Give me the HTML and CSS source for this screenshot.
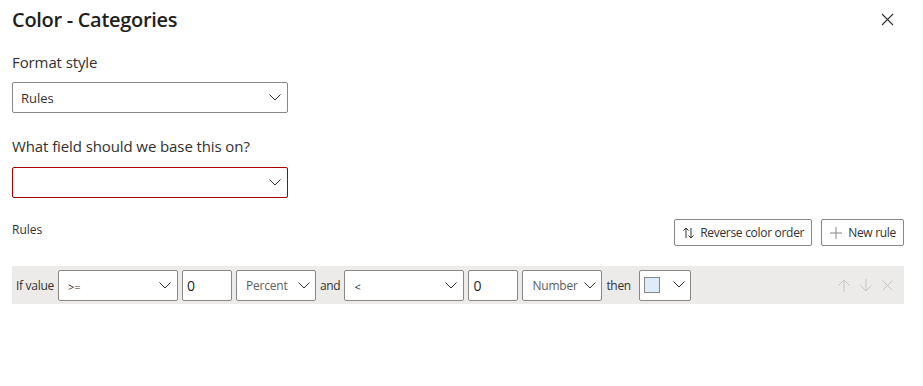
FILE: index.html
```html
<!DOCTYPE html>
<html lang="en">
<head>
    <meta charset="UTF-8">
    <title>Color - Categories</title>
    <link rel="stylesheet" href="styles.css">
</head>
<body>
    <div class="panel">
        <div class="panel-header">
            <h1 class="panel-title">Color - Categories</h1>
            <button class="close-button" aria-label="Close">
                <svg width="13" height="13" viewBox="0 0 13 13"><path d="M1 1 L12 12 M12 1 L1 12" stroke="#323130" stroke-width="1.1" fill="none"/></svg>
            </button>
        </div>

        <div class="field-label">Format style</div>
        <div class="dropdown">
            <span class="dropdown-text">Rules</span>
            <svg class="chevron" width="12" height="7" viewBox="0 0 12 7"><path d="M0.5 0.5 L6 6 L11.5 0.5" stroke="#323130" fill="none"/></svg>
        </div>

        <div class="field-label field-label-second">What field should we base this on?</div>
        <div class="dropdown dropdown-error">
            <span class="dropdown-text"></span>
            <svg class="chevron" width="12" height="7" viewBox="0 0 12 7"><path d="M0.5 0.5 L6 6 L11.5 0.5" stroke="#323130" fill="none"/></svg>
        </div>

        <div class="rules-header">
            <div class="rules-label">Rules</div>
            <div class="rules-actions">
                <button class="action-button">
                    <svg width="11" height="12" viewBox="0 0 11 12"><path d="M3 11 V1 M0.5 3.5 L3 1 L5.5 3.5 M8 1 V11 M5.5 8.5 L8 11 L10.5 8.5" stroke="#323130" fill="none"/></svg>
                    Reverse color order
                </button>
                <button class="action-button">
                    <svg width="12" height="12" viewBox="0 0 12 12"><path d="M6 0 V12 M0 6 H12" stroke="#8a8886" fill="none"/></svg>
                    New rule
                </button>
            </div>
        </div>

        <div class="rule-row">
            <span class="row-text">If value</span>
            <div class="row-select select-op">
                <span class="op-text">&gt;=</span>
                <svg class="chevron" width="12" height="7" viewBox="0 0 12 7"><path d="M0.5 0.5 L6 6 L11.5 0.5" stroke="#323130" fill="none"/></svg>
            </div>
            <div class="row-input">0</div>
            <div class="row-select select-type">
                <span class="type-text">Percent</span>
                <svg class="chevron" width="12" height="7" viewBox="0 0 12 7"><path d="M0.5 0.5 L6 6 L11.5 0.5" stroke="#323130" fill="none"/></svg>
            </div>
            <span class="row-text">and</span>
            <div class="row-select select-op">
                <span class="op-text">&lt;</span>
                <svg class="chevron" width="12" height="7" viewBox="0 0 12 7"><path d="M0.5 0.5 L6 6 L11.5 0.5" stroke="#323130" fill="none"/></svg>
            </div>
            <div class="row-input">0</div>
            <div class="row-select select-type">
                <span class="type-text">Number</span>
                <svg class="chevron" width="12" height="7" viewBox="0 0 12 7"><path d="M0.5 0.5 L6 6 L11.5 0.5" stroke="#323130" fill="none"/></svg>
            </div>
            <span class="row-text row-text-then">then</span>
            <div class="color-picker">
                <span class="swatch"></span>
                <svg class="chevron chevron-top" width="12" height="7" viewBox="0 0 12 7"><path d="M0.5 0.5 L6 6 L11.5 0.5" stroke="#323130" fill="none"/></svg>
            </div>
            <div class="row-icons">
                <svg width="12" height="13" viewBox="0 0 12 13"><path d="M6 13 V1 M0.5 6.5 L6 1 L11.5 6.5" stroke="#c8c6c4" fill="none"/></svg>
                <svg width="12" height="13" viewBox="0 0 12 13"><path d="M6 0 V12 M0.5 6.5 L6 12 L11.5 6.5" stroke="#c8c6c4" fill="none"/></svg>
                <svg width="11" height="11" viewBox="0 0 11 11"><path d="M0.5 0.5 L10.5 10.5 M10.5 0.5 L0.5 10.5" stroke="#c8c6c4" fill="none"/></svg>
            </div>
        </div>
    </div>
</body>
</html>
```

FILE: styles.css
```css
body {
    margin: 0;
    background-color: #ffffff;
    font-family: "Open Sans", "Noto Sans", sans-serif;
    color: #323130;
}

.panel {
    width: 923px;
    height: 386px;
    padding: 5px 19px 0 12px;
    box-sizing: border-box;
}

.panel-header {
    display: flex;
    justify-content: space-between;
    align-items: center;
    height: 28px;
}

.panel-title {
    margin: 0;
    font-size: 20px;
    font-weight: 600;
    color: #201f1e;
    letter-spacing: -0.3px;
}

.close-button {
    border: none;
    background: none;
    padding: 0;
    margin-right: 10px;
    display: flex;
}

.field-label {
    margin-top: 19px;
    font-size: 15px;
    line-height: 20px;
    letter-spacing: -0.1px;
    color: #323130;
}

.field-label-second {
    margin-top: 23px;
}

.dropdown {
    margin-top: 10px;
    width: 276px;
    height: 31px;
    box-sizing: border-box;
    border: 1px solid #8a8886;
    border-radius: 2px;
    display: flex;
    align-items: center;
    justify-content: space-between;
    padding: 0 6px 0 8px;
}

.dropdown-error {
    margin-top: 11px;
    border-color: #a80000;
}

.dropdown-text {
    font-size: 13px;
    color: #323130;
}

.rules-header {
    margin-top: 21px;
    display: flex;
    justify-content: space-between;
    align-items: flex-start;
}

.rules-label {
    font-size: 12px;
    line-height: 18px;
    margin-top: 2px;
}

.rules-actions {
    display: flex;
    gap: 9px;
}

.action-button {
    height: 27px;
    box-sizing: border-box;
    border: 1px solid #8a8886;
    border-radius: 2px;
    background: #ffffff;
    display: flex;
    align-items: center;
    gap: 6px;
    padding: 0 7px 0 8px;
    font-family: "Open Sans", "Noto Sans", sans-serif;
    font-size: 12px;
    letter-spacing: -0.3px;
    color: #323130;
}

.rule-row {
    margin-top: 20px;
    background-color: #edebe9;
    height: 38px;
    box-sizing: border-box;
    display: flex;
    align-items: center;
    padding: 0 0 0 4px;
}

.row-text {
    font-size: 12px;
    letter-spacing: -0.3px;
    margin-right: 4px;
}

.row-text-then {
    margin-right: 8px;
}

.row-select,
.row-input,
.color-picker {
    height: 31px;
    box-sizing: border-box;
    border: 1px solid #8a8886;
    border-radius: 2px;
    background: #ffffff;
    display: flex;
    align-items: center;
    margin-right: 4px;
}

.select-op {
    width: 120px;
    justify-content: space-between;
    padding: 0 6px 0 9px;
}

.op-text {
    font-size: 11px;
    margin-top: 3px;
}

.row-input {
    width: 50px;
    padding-left: 4px;
    font-size: 14px;
    color: #201f1e;
}

.select-type {
    width: 80px;
    justify-content: space-between;
    padding: 0 5px 0 9px;
}

.type-text {
    font-size: 12px;
    letter-spacing: -0.2px;
    color: #605e5c;
}

.color-picker {
    width: 52px;
    padding: 0 5px 0 4px;
    justify-content: space-between;
}

.swatch {
    width: 16px;
    height: 16px;
    box-sizing: border-box;
    border: 1px solid #8a8886;
    background-color: #deecf9;
}

.chevron-top {
    align-self: flex-start;
    margin-top: 10px;
}

.row-icons {
    margin-left: auto;
    display: flex;
    align-items: center;
    gap: 10px;
    padding-right: 11px;
}
```
